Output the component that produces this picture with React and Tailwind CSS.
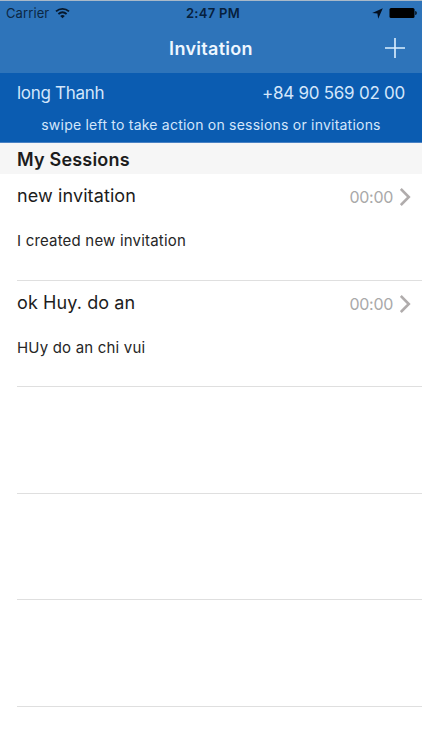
const sessions = [
  { id: 1, title: 'new invitation', message: 'I created new invitation', time: '00:00' },
  { id: 2, title: 'ok Huy. do an', message: 'HUy do an chi vui', time: '00:00' },
];

const emptyRows = [3, 4, 5];

const WifiIcon = () => (
  <svg width="15" height="12" viewBox="0 0 15 12" fill="none" stroke="#06182c" strokeWidth="1.8">
    <path d="M1 4.4C4.8 0.9 10.2 0.9 14 4.4" />
    <path d="M3.4 7C5.9 4.8 9.1 4.8 11.6 7" />
    <path d="M7.5 11.3L5.2 8.9C6.6 7.8 8.4 7.8 9.8 8.9Z" fill="#06182c" stroke="none" />
  </svg>
);

const StatusBar = () => (
  <div className="flex h-[24px] items-center justify-between pl-[6px] pr-[5px] text-[13px] leading-none text-[#0c2743]">
    <div className="flex flex-1 items-center gap-[6px]">
      <span className="tracking-[0.1px]">Carrier</span>
      <WifiIcon />
    </div>
    <span className="pl-[3px] font-semibold tracking-[0.3px] text-[#06203d]">2:47 PM</span>
    <div className="flex flex-1 items-center justify-end gap-[6px]">
      <svg width="11" height="11" viewBox="0 0 11 11" fill="#041020">
        <path d="M10.8 0.3L6.2 10.8L5.4 5.6L0.2 5Z" />
      </svg>
      <svg width="28" height="12" viewBox="0 0 28 12">
        <rect x="0.5" y="1" width="25" height="10" rx="1.5" fill="#000" />
        <path d="M26.3 4V8C27.4 7.6 27.7 6.8 27.7 6C27.7 5.2 27.4 4.4 26.3 4Z" fill="#000" />
      </svg>
    </div>
  </div>
);

const NavBar = () => (
  <div className="grid h-[48px] grid-cols-3 items-center pl-[17px] pr-[17px]">
    <span />
    <h1 className="text-center text-[18px] font-semibold leading-none tracking-[0.3px] text-[#eef7ff]">Invitation</h1>
    <button className="justify-self-end pb-[3px]" aria-label="Add">
      <svg width="20" height="20" viewBox="0 0 20 20" stroke="#dcefff" strokeWidth="1.6">
        <path d="M10 0V20M0 10H20" />
      </svg>
    </button>
  </div>
);

const SessionRow = ({ session }) => (
  <li className="h-[106.5px] pl-[17px]">
    <div className="h-full border-b border-[#dfdfdf]">
      <div className="flex items-start justify-between pr-[11px] pt-[10px]">
        <h3 className="text-[18px] leading-[24px] tracking-[0.1px] text-[#1c1c1c]">{session.title}</h3>
        <div className="flex items-center gap-[7px] pt-px text-[#a9a9a9]">
          <span className="text-[16px] leading-[24px] tracking-[-0.3px]">{session.time}</span>
          <svg width="11" height="18" viewBox="0 0 11 18" fill="none" stroke="#b0acac" strokeWidth="2.6">
            <path d="M0.8 1L8.8 9L0.8 17" />
          </svg>
        </div>
      </div>
      <p className="pt-[21px] text-[15px] leading-[22px] tracking-[0.19px] text-[#262626]">{session.message}</p>
    </div>
  </li>
);

const InvitationScreen = () => {
  return (
    <div className="h-[750px] w-[422px] overflow-hidden bg-white font-['Inter','Liberation_Sans',sans-serif]">
      <header className="h-[73px] border-t border-[#a9b9c9] bg-[#2e74ba]">
        <StatusBar />
        <NavBar />
      </header>

      <section className="h-[70px] border-b border-[#4a82c4] bg-[#0b5cb1] pl-[17px] pr-[17px] pt-[8px] text-[#d3e6fb]">
        <div className="flex justify-between text-[17px] leading-[24px] tracking-[-0.3px]">
          <span>long Thanh</span>
          <span className="tracking-[-0.25px]">+84 90 569 02 00</span>
        </div>
        <p className="whitespace-nowrap pt-[10px] text-center text-[14px] leading-[20px] tracking-[0.22px]">
          swipe left to take action on sessions or invitations
        </p>
      </section>

      <h2 className="h-[31px] bg-[#f6f6f6] pl-[17px] text-[18px] font-semibold leading-[33px] tracking-[0.2px] text-[#1c1c1c]">
        My Sessions
      </h2>

      <ul>
        {sessions.map((session) => (
          <SessionRow key={session.id} session={session} />
        ))}
        {emptyRows.map((row) => (
          <li key={row} className="h-[106.5px] pl-[17px]">
            <div className="h-full border-b border-[#dfdfdf]" />
          </li>
        ))}
      </ul>
    </div>
  );
};

export default InvitationScreen;
